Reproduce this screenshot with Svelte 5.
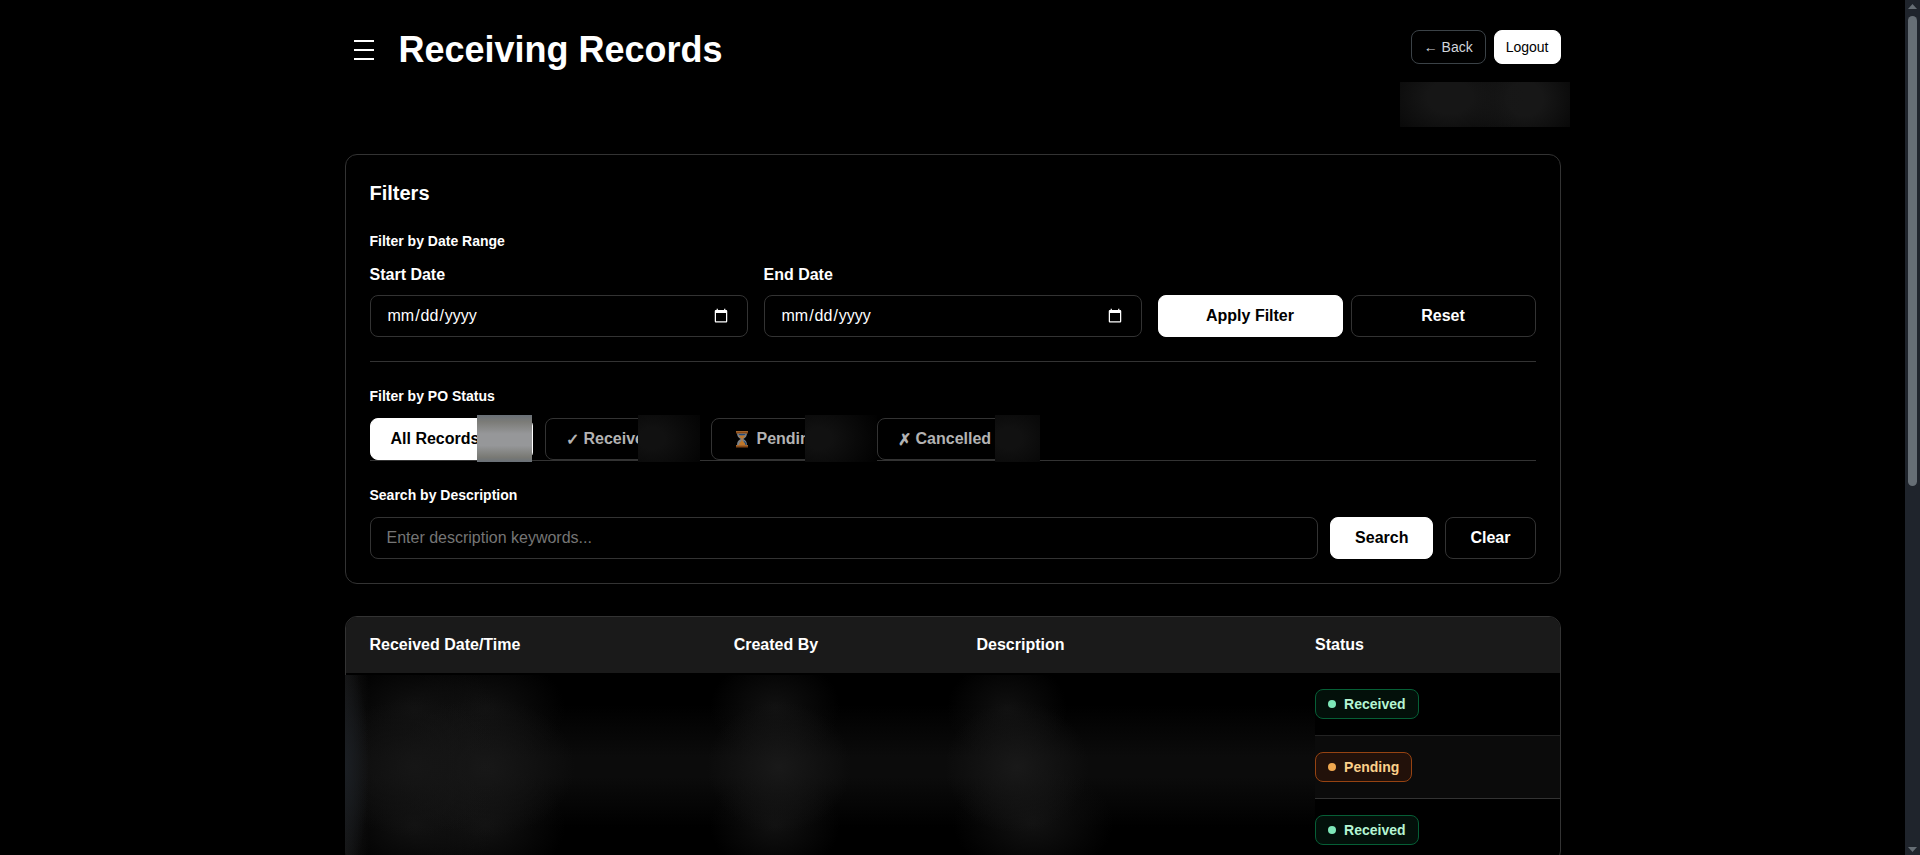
<script lang="ts">
  interface Tab {
    id: string;
    icon: string;
    label: string;
    width: number;
    maskStart: number;
    maskWidth: number;
  }

  const tabs: Tab[] = [
    { id: 'all', icon: '', label: 'All Records', width: 163, maskStart: 106, maskWidth: 55 },
    { id: 'received', icon: '✓', label: 'Received', width: 154, maskStart: 92, maskWidth: 62 },
    { id: 'pending', icon: 'hourglass', label: 'Pending', width: 154, maskStart: 93, maskWidth: 72 },
    { id: 'cancelled', icon: '✗', label: 'Cancelled', width: 154, maskStart: 117, maskWidth: 45 }
  ];

  const records = [
    { id: 1, status: 'Received' },
    { id: 2, status: 'Pending' },
    { id: 3, status: 'Received' }
  ];

  let activeTab = $state('all');
  let startDate = $state('');
  let endDate = $state('');
  let keywords = $state('');

  function resetDates() {
    startDate = '';
    endDate = '';
  }
</script>

<div class="viewport">
  <main class="page">
    <header class="header">
      <div class="heading">
        <button class="menu" type="button" aria-label="Open menu">
          <span></span>
          <span></span>
          <span></span>
        </button>
        <h1>Receiving Records</h1>
      </div>
      <div class="account">
        <div class="account-actions">
          <button class="small outline" type="button">← Back</button>
          <button class="small solid" type="button">Logout</button>
        </div>
        <div class="user-mask" aria-hidden="true"></div>
      </div>
    </header>

    <section class="filters">
      <h2>Filters</h2>

      <form class="group" onsubmit={(event) => event.preventDefault()}>
        <h3>Filter by Date Range</h3>
        <div class="dates">
          <div class="field">
            <label for="start-date">Start Date</label>
            <input id="start-date" type="date" bind:value={startDate} />
          </div>
          <div class="field">
            <label for="end-date">End Date</label>
            <input id="end-date" type="date" bind:value={endDate} />
          </div>
          <div class="date-actions">
            <button class="btn solid" type="submit">Apply Filter</button>
            <button class="btn outline" type="button" onclick={resetDates}>Reset</button>
          </div>
        </div>
      </form>

      <div class="group status-group">
        <h3>Filter by PO Status</h3>
        <div class="tabs">
          {#each tabs as tab (tab.id)}
            <button
              class="tab"
              class:active={activeTab === tab.id}
              type="button"
              style:width={`${tab.width}px`}
              onclick={() => (activeTab = tab.id)}
            >
              {#if tab.icon === 'hourglass'}
                <svg class="hourglass" viewBox="0 0 20 18" aria-hidden="true">
                  <path d="M5 3h10c0 3.200-1.300 4.800-3.700 6 2.400 1.200 3.700 3 3.700 6H5c0-3 1.300-4.800 3.700-6C6.300 7.800 5 6.200 5 3z" fill="#7c8288" />
                  <path d="M6.500 4h7c-.5 1-1.600 1.600-3.500 1.600S7 5 6.500 4z" fill="#1f4a7c" />
                  <path d="M11.500 10.500c2 1.200 2.900 2.600 3 4.500h-2z" fill="#1f4a7c" />
                  <path d="M6.800 5.600h6.400c-.6 1.500-1.700 2.300-2.700 2.900v2.600c1.500.8 2.500 2 2.900 3.900H7c.4-1.900 1.200-3.100 2.500-3.900V8.500c-1-.6-2.100-1.400-2.700-2.900z" fill="#c0772a" />
                  <path d="M4 1h12v2.500H4zM4 15h12v2.500H4z" fill="#874815" />
                  <path d="M4 1h12v1H4zM4 15h12v1H4z" fill="#a3652c" />
                </svg>
              {:else if tab.icon}
                <span>{tab.icon}</span>
              {/if}
              <span>{tab.label}</span>
              <span
                class="tab-mask"
                style:left={`${tab.maskStart}px`}
                style:width={`${tab.maskWidth}px`}
              ></span>
            </button>
          {/each}
        </div>
      </div>

      <form class="group" onsubmit={(event) => event.preventDefault()}>
        <label class="group-label" for="keywords">Search by Description</label>
        <div class="search">
          <input
            id="keywords"
            type="text"
            placeholder="Enter description keywords..."
            bind:value={keywords}
          />
          <button class="btn solid" type="submit">Search</button>
          <button class="btn outline" type="button" onclick={() => (keywords = '')}>Clear</button>
        </div>
      </form>
    </section>

    <section class="records">
      <table>
        <colgroup>
          <col class="col-date" />
          <col class="col-author" />
          <col class="col-description" />
          <col class="col-status" />
        </colgroup>
        <thead>
          <tr>
            <th scope="col">Received Date/Time</th>
            <th scope="col">Created By</th>
            <th scope="col">Description</th>
            <th scope="col">Status</th>
          </tr>
        </thead>
        <tbody>
          {#each records as record (record.id)}
            <tr>
              <td></td>
              <td></td>
              <td></td>
              <td>
                <span class="badge" class:pending={record.status === 'Pending'}>
                  <span class="dot"></span>
                  {record.status}
                </span>
              </td>
            </tr>
          {/each}
        </tbody>
      </table>
      <div class="records-mask" aria-hidden="true"></div>
    </section>
  </main>

  <div class="scrollbar" aria-hidden="true">
    <svg viewBox="0 0 9 5"><path d="M0 5L4.500 0L9 5z" /></svg>
    <div class="track"><div class="thumb"></div></div>
    <svg viewBox="0 0 9 5"><path d="M0 0L4.500 5L9 0z" /></svg>
  </div>
</div>

<style>
  :global(body) {
    margin: 0;
    background: #000;
    color: #fff;
    color-scheme: dark;
    font-family: 'Liberation Sans', Arial, sans-serif;
    font-size: 16px;
    line-height: 24px;
  }

  .viewport {
    display: grid;
    grid-template-columns: 1fr 15px;
    height: 100vh;
    overflow: hidden;
  }

  .page {
    box-sizing: border-box;
    width: 100%;
    max-width: 1280px;
    min-width: 0;
    margin: 0 auto;
    padding: 30px 32px;
  }

  h1,
  h2,
  h3 {
    margin: 0;
  }

  button,
  input {
    box-sizing: border-box;
    margin: 0;
    font-family: inherit;
  }

  button {
    cursor: pointer;
  }

  .header {
    display: flex;
    justify-content: space-between;
    align-items: flex-start;
    margin-bottom: 27px;
  }

  .heading {
    display: flex;
    align-items: center;
    gap: 16px;
  }

  .heading h1 {
    font-size: 36px;
    line-height: 40px;
  }

  .menu {
    display: grid;
    gap: 7px;
    width: 38px;
    padding: 9px;
    border: 0;
    background: none;
  }

  .menu span {
    height: 2px;
    background: #fff;
  }

  .account {
    display: grid;
    justify-items: end;
    gap: 18px;
  }

  .account-actions {
    display: flex;
    gap: 8px;
  }

  .small {
    height: 34px;
    padding: 0 11px;
    border-radius: 8px;
    font-size: 14px;
    line-height: 20px;
  }

  .outline {
    border: 1px solid #333;
    background: #000;
    color: #fff;
  }

  .solid {
    border: 1px solid #fff;
    background: #fff;
    color: #000;
  }

  .small.outline {
    padding: 0 12px;
    border-color: #3b4247;
    color: #d1d5db;
  }

  .user-mask {
    width: 170px;
    height: 45px;
    margin-right: -9px;
    background:
      radial-gradient(ellipse 75px 55px at 50px 15px, #161616 30%, transparent),
      radial-gradient(ellipse 60px 55px at 125px 17px, #171717 30%, transparent),
      #060606;
  }

  .filters {
    margin-bottom: 32px;
    padding: 24px;
    border: 1px solid #333;
    border-radius: 12px;
  }

  .filters h2 {
    margin-bottom: 24px;
    font-size: 20px;
    line-height: 28px;
  }

  .group h3,
  .group-label {
    display: block;
    margin-bottom: 12px;
    font-size: 14px;
    font-weight: 700;
    line-height: 20px;
  }

  .dates {
    display: grid;
    grid-template-columns: repeat(3, 1fr);
    align-items: end;
    gap: 16px;
  }

  .field {
    display: grid;
    gap: 8px;
    font-weight: 700;
  }

  input {
    width: 100%;
    height: 42px;
    padding: 0 16px;
    border: 1px solid #333;
    border-radius: 8px;
    background: #000;
    color: #fff;
    font-size: 16px;
  }

  input::placeholder {
    color: #757575;
  }

  .date-actions {
    display: grid;
    grid-template-columns: 1fr 1fr;
    gap: 8px;
  }

  .btn {
    height: 42px;
    padding: 0 24px;
    border-radius: 8px;
    font-size: 16px;
    font-weight: 700;
  }

  .status-group {
    margin: 24px 0;
    padding-top: 24px;
    border-top: 1px solid #333;
  }

  .tabs {
    display: flex;
    gap: 12px;
    border-bottom: 1px solid #333;
  }

  .tab {
    position: relative;
    display: flex;
    align-items: center;
    gap: 5px;
    height: 42px;
    padding: 0 20px;
    border: 1px solid #333;
    border-radius: 8px;
    background: #000;
    color: #b3b3b3;
    font-size: 16px;
    font-weight: 700;
    white-space: nowrap;
  }

  .tab.active {
    border-color: #fff;
    background: #fff;
    color: #000;
  }

  .hourglass {
    flex: none;
    width: 20px;
    height: 18px;
  }

  .tab-mask {
    position: absolute;
    top: -4px;
    bottom: -3px;
    background: radial-gradient(ellipse 64px 52px at 14px 50%, #111 20%, #010101);
  }

  .tab.active .tab-mask {
    background: linear-gradient(#697078, #7b7b77 14%, #969799 40% 65%, #797974 90%, #697078);
  }

  .search {
    display: flex;
    gap: 12px;
  }

  .search input {
    flex: 1;
    min-width: 0;
  }

  .records {
    position: relative;
    overflow: clip;
    overflow-clip-margin: 1px;
    border: 1px solid #333;
    border-radius: 12px;
  }

  table {
    width: 100%;
    table-layout: fixed;
    border-collapse: separate;
    border-spacing: 0;
  }

  .col-date {
    width: 270px;
  }

  .col-author {
    width: 180px;
  }

  .col-description {
    width: 251px;
  }

  .col-status {
    width: 199px;
  }

  th {
    padding: 16px 24px;
    background: #1a1a1a;
    text-align: left;
  }

  th:first-child {
    border-top-left-radius: 11px;
  }

  th:last-child {
    border-top-right-radius: 11px;
  }

  td {
    padding: 16px 24px;
    border-bottom: 1px solid #222;
  }

  tbody tr:nth-child(even) td {
    border-bottom-color: #333;
    background: #0b0b0b;
  }

  .badge {
    box-sizing: border-box;
    display: flex;
    align-items: center;
    gap: 8px;
    width: max-content;
    height: 30px;
    padding: 0 12px;
    border: 1px solid #065f36;
    border-radius: 8px;
    background: #03100a;
    color: #b5f5d3;
    font-size: 14px;
    font-weight: 700;
    line-height: 20px;
  }

  .dot {
    width: 8px;
    height: 8px;
    border-radius: 50%;
    background: #7ee7b8;
  }

  .badge.pending {
    border-color: #964312;
    background: #22110a;
    color: #fbd08a;
  }

  .pending .dot {
    background: #f0a850;
  }

  /* Smears over the private columns of the table body */
  .records-mask {
    position: absolute;
    top: 58px;
    bottom: 0;
    left: -1px;
    right: 245px;
    background:
      radial-gradient(ellipse 24px 110px at 0 92px, #1b1f24, transparent),
      linear-gradient(90deg, #151515, transparent 24px),
      radial-gradient(ellipse 90px 70px at 70px 92px, #161616, transparent),
      radial-gradient(ellipse 90px 70px at 140px 92px, #181818, transparent),
      radial-gradient(ellipse 80px 55px at 70px 34px, #111, transparent),
      radial-gradient(ellipse 80px 55px at 140px 34px, #111, transparent),
      radial-gradient(ellipse 80px 60px at 70px 150px, #121212, transparent),
      radial-gradient(ellipse 80px 60px at 140px 150px, #121212, transparent),
      radial-gradient(ellipse 72px 66px at 434px 92px, #191919, transparent),
      radial-gradient(ellipse 65px 50px at 430px 32px, #111, transparent),
      radial-gradient(ellipse 65px 50px at 430px 150px, #111, transparent),
      radial-gradient(ellipse 72px 66px at 672px 92px, #191919, transparent),
      radial-gradient(ellipse 60px 50px at 662px 34px, #101010, transparent),
      radial-gradient(ellipse 80px 56px at 688px 148px, #121212, transparent),
      linear-gradient(#000 30px, #0b0b0b 82px, #0b0b0b 102px, #000 152px);
  }

  .scrollbar {
    display: grid;
    grid-template-rows: auto 1fr auto;
    justify-items: center;
    box-sizing: border-box;
    height: 100vh;
    padding: 4px 3px 3px;
    background: #1f242c;
  }

  .scrollbar svg {
    display: block;
    width: 9px;
    height: 5px;
    fill: #666e75;
  }

  .track {
    width: 9px;
    padding: 7px 0;
  }

  .thumb {
    height: 57%;
    border-radius: 5px;
    background: #666e75;
  }
</style>
